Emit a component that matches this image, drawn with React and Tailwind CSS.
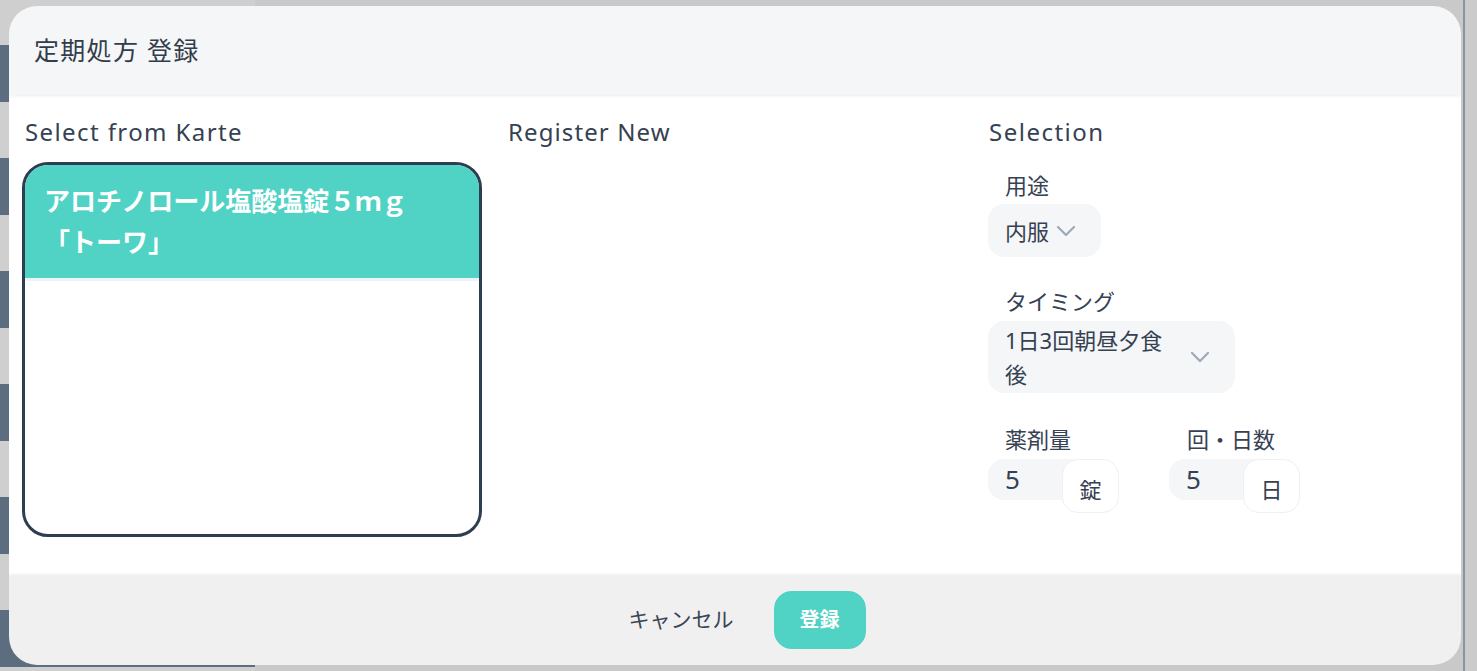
import React from 'react'

/*
Periodic prescription register modal
Shown above the patient page, which stays visible round the edges
*/

const font = { fontFamily: '"Noto Sans", "Noto Sans CJK JP", sans-serif' }

const Chevron = () => (
    <svg width="20" height="12" viewBox="0 0 20 12" fill="none" className="ml-auto shrink-0">
        <path d="M2 2l8 8 8-8" stroke="#9ea9b8" strokeWidth="2.2" strokeLinecap="round" strokeLinejoin="round" />
    </svg>
)

const SelectBox = ({ children, className }) => {
    return (
        <div className={"flex items-center rounded-[16px] bg-[#f5f6f8] pl-[17px] " + className}>
            <div className="text-[22px] leading-[34px] text-[#364152]">{children}</div>
            <Chevron />
        </div>
    )
}

const UnitInput = ({ value, unit }) => {
    return (
        <div className="flex items-start">
            <div className="flex h-[41px] w-[86px] items-center rounded-l-[16px] bg-[#f5f6f8] pl-[17px] text-[26px] text-[#364152]">
                {value}
            </div>
            <div className="-ml-[12px] flex h-[54px] w-[57px] items-center justify-center rounded-[16px] border border-[#eef0f3] bg-white pt-[6px] text-[22px] text-[#364152]">
                {unit}
            </div>
        </div>
    )
}

const App = () => {
    const blocks = [0, 1, 2, 3, 4, 5]

    return (
        <div className="relative h-[671px] w-[1477px] overflow-hidden bg-[#c9c9c9]" style={font}>
            {/* page behind the modal */}
            <div className="flex h-full">
                <div className="flex w-[255px] flex-col gap-[56px] bg-[#cfcfcf] pt-[45px]">
                    {blocks.map((b) => (
                        <div key={b} className="h-[57px] shrink-0 bg-[#5b6d7f]" />
                    ))}
                </div>
                <div className="flex-1" />
                <div className="w-[14px] border-l-2 border-[#8a94a0] bg-[#cbcbcb]" />
            </div>

            {/* modal */}
            <div className="absolute left-[9px] top-[6px] flex h-[659px] w-[1452px] flex-col overflow-hidden rounded-[28px]">
                <header className="z-10 flex h-[89px] shrink-0 items-center bg-[#f5f6f8] px-[25px] shadow-[0_1px_3px_rgba(0,0,0,0.08)]">
                    <h1 className="text-[25px] tracking-[1.3px] text-[#333d4a]">定期処方 登録</h1>
                </header>

                <div className="grid flex-1 grid-cols-[483px_483px_1fr] bg-white pl-[13px] pt-[21px]">
                    <div className="flex flex-col">
                        <h2 className="pl-[3px] text-[24px] leading-[32px] tracking-[1.4px] text-[#364152]">Select from Karte</h2>
                        <div className="mt-[14px] h-[375px] w-[460px] overflow-hidden rounded-[26px] border-[3px] border-[#2c3e50]">
                            <div className="border-b-[3px] border-[#eef3f7] bg-[#50d2c5] px-[19px] pb-[15px] pt-[16px] text-[26px] font-bold leading-[41px] text-white">
                                アロチノロール塩酸塩錠５ｍｇ<br />「トーワ」
                            </div>
                        </div>
                    </div>

                    <div>
                        <h2 className="pl-[3px] text-[24px] leading-[32px] tracking-[1.1px] text-[#364152]">Register New</h2>
                    </div>

                    <div className="flex flex-col">
                        <h2 className="pl-[1px] text-[24px] leading-[32px] tracking-[1.5px] text-[#364152]">Selection</h2>

                        <label className="mt-[22px] pl-[17px] text-[22px] leading-[30px] text-[#364152]">用途</label>
                        <SelectBox className="mt-[4px] h-[53px] w-[113px] pr-[25px]">内服</SelectBox>

                        <label className="mt-[29px] pl-[17px] text-[22px] leading-[30px] text-[#364152]">タイミング</label>
                        <SelectBox className="mt-[5px] h-[72px] w-[247px] pr-[25px]">
                            1日3回朝昼夕食<br />後
                        </SelectBox>

                        <div className="mt-[31px] flex gap-[50px]">
                            <div className="flex flex-col">
                                <label className="pl-[17px] text-[22px] leading-[30px] text-[#364152]">薬剤量</label>
                                <div className="mt-[5px]">
                                    <UnitInput value="5" unit="錠" />
                                </div>
                            </div>
                            <div className="flex flex-col">
                                <label className="pl-[18px] text-[22px] leading-[30px] text-[#364152]">回・日数</label>
                                <div className="mt-[5px]">
                                    <UnitInput value="5" unit="日" />
                                </div>
                            </div>
                        </div>
                    </div>
                </div>

                <footer className="z-10 flex h-[90px] shrink-0 items-center justify-center gap-[22px] bg-[#f0f0f0] pl-[6px] shadow-[0_-1px_3px_rgba(0,0,0,0.06)]">
                    <button className="h-[58px] px-[18px] text-[21px] text-[#3a4555]">キャンセル</button>
                    <button className="h-[58px] w-[92px] rounded-[18px] bg-[#50d2c5] text-[20px] font-bold text-white">登録</button>
                </footer>
            </div>
        </div>
    )
}

export default App
